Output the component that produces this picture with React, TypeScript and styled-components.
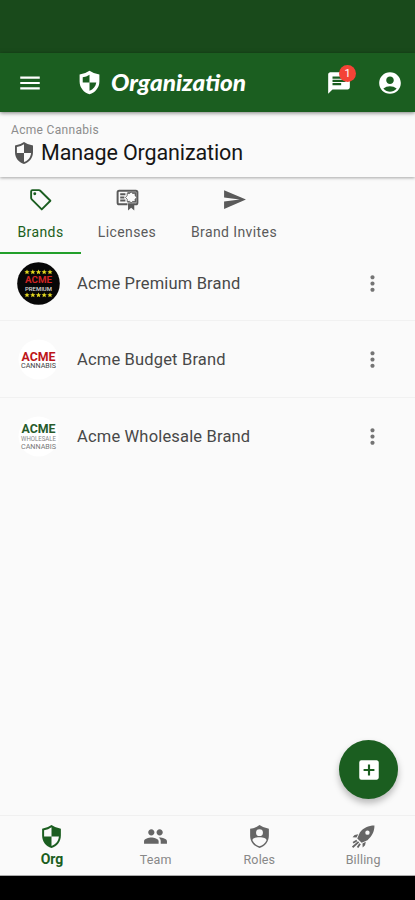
import React from "react";
import styled, { createGlobalStyle, css } from "styled-components";
import { MdMenu, MdChat, MdAccountCircle, MdSend, MdMoreVert, MdAddBox, MdPeople } from "react-icons/md";

const Global = createGlobalStyle`
  * { box-sizing: border-box; }
  body { margin: 0; background: #fafafa; font-family: Roboto, sans-serif; }
  svg { display: block; flex: none; }
`;

const Screen = styled.div`
  width: 415px;
  height: 900px;
  display: flex;
  flex-direction: column;
  overflow: hidden;
  background: #fafafa;
`;
const StatusBar = styled.div`
  height: 53px;
  flex: none;
  background: #194a1b;
`;
const AppBar = styled.header`
  height: 59px;
  flex: none;
  display: flex;
  align-items: center;
  padding: 0 12px 0 17px;
  background: #1b5e20;
  color: #fff;
  z-index: 2;
  box-shadow: 0 1px 4px rgba(0, 0, 0, 0.5);
`;
const AppTitle = styled.h1`
  margin: 0 auto 0 9px;
  display: flex;
  font: italic 900 22px/30px Lato, sans-serif;
  -webkit-text-stroke: 0.9px #fff;
`;
const TitleText = styled.svg`
  overflow: visible;
`;
const BrandShield = styled.span`
  margin-left: 34px;
`;
const ChatButton = styled.span`
  position: relative;
  margin-right: 25px;
`;
const Badge = styled.span`
  position: absolute;
  top: -5px;
  right: -4px;
  width: 17px;
  height: 17px;
  border-radius: 50%;
  background: #f44336;
  font-size: 11px;
  line-height: 17px;
  text-align: center;
`;
const Heading = styled.section`
  height: 65px;
  flex: none;
  padding: 11px 11px 0;
  z-index: 1;
  background: #fafafa;
  box-shadow: 0 1px 3px rgba(0, 0, 0, 0.34);
`;
const Company = styled.div`
  font-size: 12px;
  line-height: 15px;
  letter-spacing: 0.32px;
  color: #8c8c8c;
`;
const HeadingRow = styled.h2`
  margin: 2px 0 0 1px;
  display: flex;
  align-items: center;
  gap: 5px;
  font-size: 21.5px;
  line-height: 26px;
  font-weight: 400;
  letter-spacing: -0.13px;
  color: #161616;
  svg { color: #555; }
`;
const Tabs = styled.nav`
  height: 77px;
  flex: none;
  display: flex;
`;
const Tab = styled.div<{ $width: number; $active?: boolean }>`
  width: ${p => p.$width}px;
  display: flex;
  flex-direction: column;
  align-items: center;
  padding-top: 10px;
  gap: 10px;
  font-size: 14px;
  line-height: 20px;
  letter-spacing: 0.4px;
  white-space: nowrap;
  color: #5a5a5a;
  ${p => p.$active && css`
    color: #1b5e20;
    border-bottom: 2px solid #22a02a;
  `}
`;
const BrandList = styled.main`
  flex: 1;
`;
const BrandRow = styled.div<{ $height: number; $top?: number; $bottom?: number }>`
  height: ${p => p.$height}px;
  padding: ${p => p.$top ?? 0}px 30px ${p => p.$bottom ?? 0}px 17px;
  display: flex;
  align-items: center;
  border-bottom: 1px solid #f1f1f1;
  color: #747474;
  &:last-child { border: 0; }
`;
const BrandName = styled.span`
  margin: 0 auto 0 17px;
  font-size: 16.5px;
  letter-spacing: 0.17px;
  color: #484848;
`;
const Fab = styled.button`
  width: 59px;
  height: 59px;
  flex: none;
  align-self: flex-end;
  margin: 0 17px 16px 0;
  padding: 0;
  border: 0;
  border-radius: 50%;
  display: grid;
  place-items: center;
  background: #1b5e20;
  color: #fff;
  box-shadow: 0 4px 7px rgba(0, 0, 0, 0.27);
`;
const BottomNav = styled.nav`
  height: 61px;
  flex: none;
  display: grid;
  grid-template-columns: repeat(4, 1fr);
  border-top: 1px solid #f0f0f0;
  border-bottom: 1px solid #aaa;
`;
const NavItem = styled.div<{ $active?: boolean }>`
  display: flex;
  flex-direction: column;
  align-items: center;
  padding-top: 8px;
  gap: 1px;
  font-size: 12.5px;
  line-height: 19px;
  letter-spacing: 0.15px;
  color: #888;
  svg { color: #666; }
  ${p => p.$active && css`
    font-size: 14px;
    line-height: 18px;
    letter-spacing: -0.1px;
    font-weight: 700;
    color: #1b5e20;
    svg { color: #1b5e20; }
  `}
`;
const SystemBar = styled.div`
  height: 24px;
  flex: none;
  background: #000;
`;
const LogoText = styled.text`
  font-family: Roboto, sans-serif;
  text-anchor: middle;
`;

const Shield = ({ size = 25 }: { size?: number }) => (
  <svg width={size} height={size} viewBox="0 0 24 24" fill="currentColor" fillRule="evenodd">
    <path d="M12 1 Q8 4 3 4.5 V11 C3 17 6.7 21.4 12 23 C17.3 21.4 21 17 21 11 V4.5 Q16 4 12 1Z M12 3.2 V12 H4.9 V6 Q9 5.5 12 3.2Z M12 12 H19.1 C18.7 16.5 16 19.6 12 21Z" />
  </svg>
);
const HeaderShield = () => (
  <svg width="25" height="25" viewBox="0 0 24 24" fill="currentColor" fillRule="evenodd">
    <path d="M12 .7 Q8 3.5 2.5 4.4 V11 C2.5 17 6.5 21.6 12 23.3 C17.5 21.6 21.5 17 21.5 11 V4.4 Q16 3.5 12 .7Z M12 4.6 V12 H5.5 V7 Q9 6.6 12 4.6Z M12 12 H18.5 C18 15.8 15.6 18.5 12 19.9Z" />
  </svg>
);
const Tag = () => (
  <svg width="25" height="25" viewBox="0 0 24 24" fill="none" stroke="currentColor" strokeWidth="1.8" strokeLinejoin="round">
    <path d="M3 4.2Q3 3 4.2 3H10.5Q11.2 3 11.8 3.6L21.5 13.2L13.2 21.5L3.6 11.8Q3 11.2 3 10.5Z" />
    <circle cx="6.5" cy="6.5" r="1.4" fill="currentColor" stroke="none" />
  </svg>
);
const License = () => (
  <svg width="25" height="25" viewBox="0 0 24 24" fill="none" stroke="currentColor" strokeWidth="2">
    <path d="M12 16.5H4Q2.5 16.5 2.5 15V5Q2.5 3.5 4 3.5H20Q21.5 3.5 21.5 5V15Q21.5 16.5 20 16.5H18M5 7H10M5 10H9M5 13H10" strokeWidth="1.9" />
    <path d="M12 5H20.5V15H12Z" fill="currentColor" stroke="none" />
    <path d="M15.5 4.8L17 6.2L19.3 6L19.3 8.3L21 10L19.3 11.7L19.3 14L17 13.8L15.5 15.2L14 13.8L11.7 14L11.7 11.7L10 10L11.7 8.3L11.7 6L14 6.2Z" fill="#fafafa" strokeWidth=".8" />
    <path d="M12.5 15.5V22.5L15.5 19.8L18.5 22.5V15.5Z" fill="currentColor" stroke="none" />
  </svg>
);
const RoleShield = () => (
  <svg width="25" height="25" viewBox="0 0 24 24" fill="currentColor" fillRule="evenodd">
    <path d="M12 1 Q8 4 3 4.5 V11 C3 17 6.7 21.4 12 23 C17.3 21.4 21 17 21 11 V4.5 Q16 4 12 1Z M12 5A3.3 3.3 0 1 0 12 11.6A3.3 3.3 0 1 0 12 5Z M12 12.6C8.2 12.6 5.2 13.8 5.2 15.5C6.7 18.6 9.2 20.6 12 21.4C14.8 20.6 17.3 18.6 18.8 15.5C18.8 13.8 15.8 12.6 12 12.6Z" />
  </svg>
);
const Rocket = () => (
  <svg width="25" height="25" viewBox="0 0 24 24" fill="currentColor" fillRule="evenodd">
    <path d="M22.5 1.5C16.5 1.5 12.2 3.6 8.5 8.2L6 13.8L10.2 18L15.8 15.5C20.3 11.6 22.5 7.5 22.5 1.5Z M15.8 6.2A2.1 2.1 0 1 0 15.8 10.4A2.1 2.1 0 1 0 15.8 6.2Z" />
    <path d="M7 9.8L3.5 10.5L1.5 12.8L5.3 13ZM14.2 17L13.5 20.5L11.2 22.5L11 18.7Z" />
    <path d="M5.6 15.8L2 18M7.3 17.2L1.5 22.3M8.7 19L6.3 22.5" fill="none" stroke="currentColor" strokeWidth="1.8" />
  </svg>
);

const PremiumLogo = () => (
  <svg width="43" height="43" viewBox="0 0 43 43">
    <circle cx="21.5" cy="21.5" r="21.3" fill="#070707" />
    {[10, 33].map(y => [10, 15.8, 21.5, 27.2, 33].map(x => (
      <path key={`${x}-${y}`} transform={`translate(${x} ${y})`} fill="#e5da20" d="M0-2.6L.8-.8L2.6-.7L1.2.5L1.7 2.3L0 1.2L-1.7 2.3L-1.2.5L-2.6-.7L-.8-.8Z" />
    )))}
    <LogoText x="21.5" y="21" fill="#cf2424" fontSize="9.5" fontWeight="700" textLength="27" lengthAdjust="spacingAndGlyphs">ACME</LogoText>
    <LogoText x="21.5" y="29" fill="#ddd" fontSize="5.8" fontWeight="500" textLength="27" lengthAdjust="spacingAndGlyphs">PREMIUM</LogoText>
  </svg>
);
const BudgetLogo = () => (
  <svg width="43" height="43" viewBox="0 0 43 43">
    <circle cx="21.5" cy="21.5" r="20" fill="#fff" />
    <LogoText x="21.5" y="22.5" fill="#bd1519" fontSize="12" fontWeight="700" textLength="34" lengthAdjust="spacingAndGlyphs">ACME</LogoText>
    <LogoText x="21.5" y="30" fill="#444" fontSize="6.7" textLength="35" lengthAdjust="spacingAndGlyphs">CANNABIS</LogoText>
  </svg>
);
const WholesaleLogo = () => (
  <svg width="43" height="43" viewBox="0 0 43 43">
    <circle cx="21.5" cy="21.5" r="20" fill="#fff" />
    <LogoText x="21.5" y="18.4" fill="#285b2b" fontSize="12" fontWeight="700" textLength="34" lengthAdjust="spacingAndGlyphs">ACME</LogoText>
    <LogoText x="21.5" y="26" fill="#858585" fontSize="6.3" textLength="35" lengthAdjust="spacingAndGlyphs">WHOLESALE</LogoText>
    <LogoText x="21.5" y="33.5" fill="#777" fontSize="6.3" textLength="35" lengthAdjust="spacingAndGlyphs">CANNABIS</LogoText>
  </svg>
);

const brands = [
  { name: "Acme Premium Brand", logo: <PremiumLogo />, height: 67, bottom: 7 },
  { name: "Acme Budget Brand", logo: <BudgetLogo />, height: 77, top: 1 },
  { name: "Acme Wholesale Brand", logo: <WholesaleLogo />, height: 76 },
];

export default function App() {
  return (
    <>
      <Global />
      <Screen>
        <StatusBar />
        <AppBar>
          <MdMenu size={26} />
          <BrandShield><HeaderShield /></BrandShield>
          <AppTitle>
            <TitleText width="136" height="30">
              <text x="0" y="22.5" fill="#fff" textLength="135" lengthAdjust="spacingAndGlyphs">Organization</text>
            </TitleText>
          </AppTitle>
          <ChatButton><MdChat size={26} /><Badge>1</Badge></ChatButton>
          <MdAccountCircle size={26} />
        </AppBar>
        <Heading>
          <Company>Acme Cannabis</Company>
          <HeadingRow><Shield size={24} />Manage Organization</HeadingRow>
        </Heading>
        <Tabs>
          <Tab $width={81} $active><Tag />Brands</Tab>
          <Tab $width={92}><License />Licenses</Tab>
          <Tab $width={122}><MdSend size={25} />Brand Invites</Tab>
        </Tabs>
        <BrandList>
          {brands.map(b => (
            <BrandRow key={b.name} $height={b.height} $top={b.top} $bottom={b.bottom}>
              {b.logo}
              <BrandName>{b.name}</BrandName>
              <MdMoreVert size={25} />
            </BrandRow>
          ))}
        </BrandList>
        <Fab aria-label="Add brand"><MdAddBox size={26} /></Fab>
        <BottomNav>
          <NavItem $active><Shield size={25} />Org</NavItem>
          <NavItem><MdPeople size={25} />Team</NavItem>
          <NavItem><RoleShield />Roles</NavItem>
          <NavItem><Rocket />Billing</NavItem>
        </BottomNav>
        <SystemBar />
      </Screen>
    </>
  );
}
